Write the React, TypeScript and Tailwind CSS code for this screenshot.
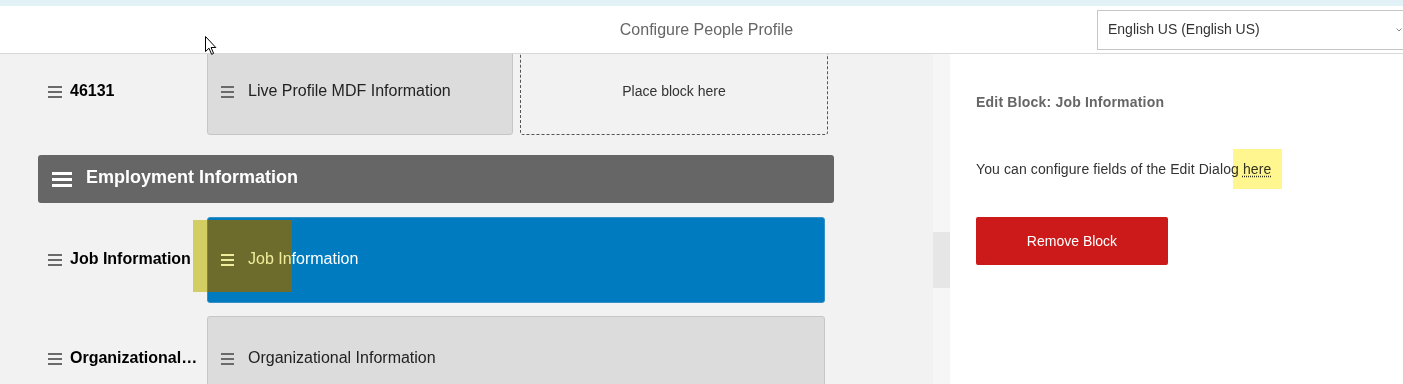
import React from "react";

const Burger = ({ className = "", w = 14, h = 12, t = 2 }: { className?: string; w?: number; h?: number; t?: number }) => (
  <svg width={w} height={h} viewBox={`0 0 ${w} ${h}`} className={className}>
    <rect x="0" y="0" width={w} height={t} fill="currentColor" />
    <rect x="0" y={(h - t) / 2} width={w} height={t} fill="currentColor" />
    <rect x="0" y={h - t} width={w} height={t} fill="currentColor" />
  </svg>
);

const Label = ({ text }: { text: string }) => (
  <div className="w-[169px] shrink-0 flex items-center pl-[10px] pr-[8px]">
    <Burger className="text-[#6a6a6a] shrink-0" />
    <span className="ml-[8px] text-[16px] leading-[18px] pb-[2px] font-bold text-black truncate min-w-0">{text}</span>
  </div>
);

export default function App() {
  return (
    <div className="w-[1403px] h-[384px] overflow-hidden relative bg-white font-['Liberation_Sans',Arial,sans-serif]">
      <div className="h-[6px] bg-[#e1f1f5]" />
      <header className="h-[48px] border-b border-[#d9d9d9] grid grid-cols-[1fr_auto_1fr] items-center bg-white">
        <div />
        <div className="text-[16px] text-[#666] pl-[10px]">Configure People Profile</div>
        <div className="justify-self-end mr-[-10px] w-[316px] h-[40px] border border-[#c6c6c6] flex items-center justify-between pl-[10px] pr-[10px] text-[14px] text-[#333]">
          <span>English US (English US)</span>
          <svg width="6" height="4" viewBox="0 0 6 4">
            <path d="M0.5 0.5 L3 3 L5.5 0.5" stroke="#888" strokeWidth="1" fill="none" />
          </svg>
        </div>
      </header>

      <div className="flex h-[330px]">
        <div className="w-[933px] shrink-0 bg-[#f2f2f2] overflow-hidden pl-[38px]">
          <div className="-mt-[5px] flex flex-col">
            <div className="flex items-center h-[86px]">
              <Label text="46131" />
              <div className="w-[306px] h-[86px] bg-[#dcdcdc] border border-[#c6c6c6] rounded-[3px] flex items-center pl-[13px]">
                <Burger className="text-[#6a6a6a]" w={13} />
                <span className="ml-[14px] text-[16px] leading-[18px] pb-[2px] text-[#222]">Live Profile MDF Information</span>
              </div>
              <div className="ml-[7px] w-[308px] h-[86px] border border-dashed border-[#555] rounded-[3px] flex items-center justify-center text-[14px] leading-[16px] pb-[2px] text-[#333]">
                Place block here
              </div>
            </div>

            <div className="mt-[20px] w-[796px] h-[48px] bg-[#666] rounded-[3px] flex items-center pl-[14px]">
              <Burger className="text-white" w={20} h={15} t={3} />
              <span className="ml-[14px] text-[18px] leading-[20px] pb-[4px] font-bold text-white">Employment Information</span>
            </div>

            <div className="mt-[14px] flex items-center h-[86px] relative">
              <Label text="Job Information" />
              <div className="absolute left-[155px] top-[3px] w-[14px] h-[72px] bg-[#d3ce63]" />
              <div className="relative w-[618px] h-[86px] bg-[#007bc0] border border-[#3590c8] rounded-[3px] flex items-center pl-[13px]">
                <div className="absolute left-0 top-[2px] w-[84px] h-[72px] bg-[#6e6c2c]" />
                <Burger className="relative text-[#efed9c]" w={13} />
                <span className="relative ml-[14px] text-[16px] leading-[18px] pb-[2px] text-white">
                  <span className="text-[#efed9c]">Job In</span>formation
                </span>
              </div>
            </div>

            <div className="mt-[13px] flex items-center h-[86px]">
              <Label text="Organizational Information" />
              <div className="w-[618px] h-[86px] bg-[#dcdcdc] border border-[#c6c6c6] rounded-[3px] flex items-center pl-[13px]">
                <Burger className="text-[#6a6a6a]" w={13} />
                <span className="ml-[14px] text-[16px] leading-[18px] pb-[2px] text-[#222]">Organizational Information</span>
              </div>
            </div>
          </div>
        </div>

        <div className="w-[17px] shrink-0 bg-[#f6f6f6]">
          <div className="mt-[178px] h-[56px] bg-[#e6e6e6]" />
        </div>

        <div className="flex-1 bg-white pl-[26px] pt-[40px]">
          <div className="text-[14px] leading-[16px] font-bold text-[#666] tracking-[0.2px]">Edit Block: Job Information</div>
          <p className="mt-[51px] text-[14px] leading-[16px] text-[#333] tracking-[0.1px]">
            You can configure fields of the Edit Dialog{" "}
            <span className="relative underline decoration-dotted underline-offset-2 text-[#333]">
              here
              <span className="absolute -left-[10px] -right-[11px] -top-[12px] -bottom-[12px] bg-[#fff68f] mix-blend-multiply" />
            </span>
          </p>
          <button className="mt-[40px] w-[192px] h-[48px] bg-[#cc1a1a] text-white text-[14px] rounded-[2px]">
            Remove Block
          </button>
        </div>
      </div>

      <svg className="absolute left-[205px] top-[36px]" width="13" height="20" viewBox="0 0 13 20">
        <path d="M0.5 0.5 L0.5 15.5 L4 12.2 L6.6 18.3 L8.6 17.4 L6.1 11.5 L10.8 11.5 Z" fill="white" stroke="black" strokeWidth="1" strokeLinejoin="round" />
      </svg>
    </div>
  );
}
